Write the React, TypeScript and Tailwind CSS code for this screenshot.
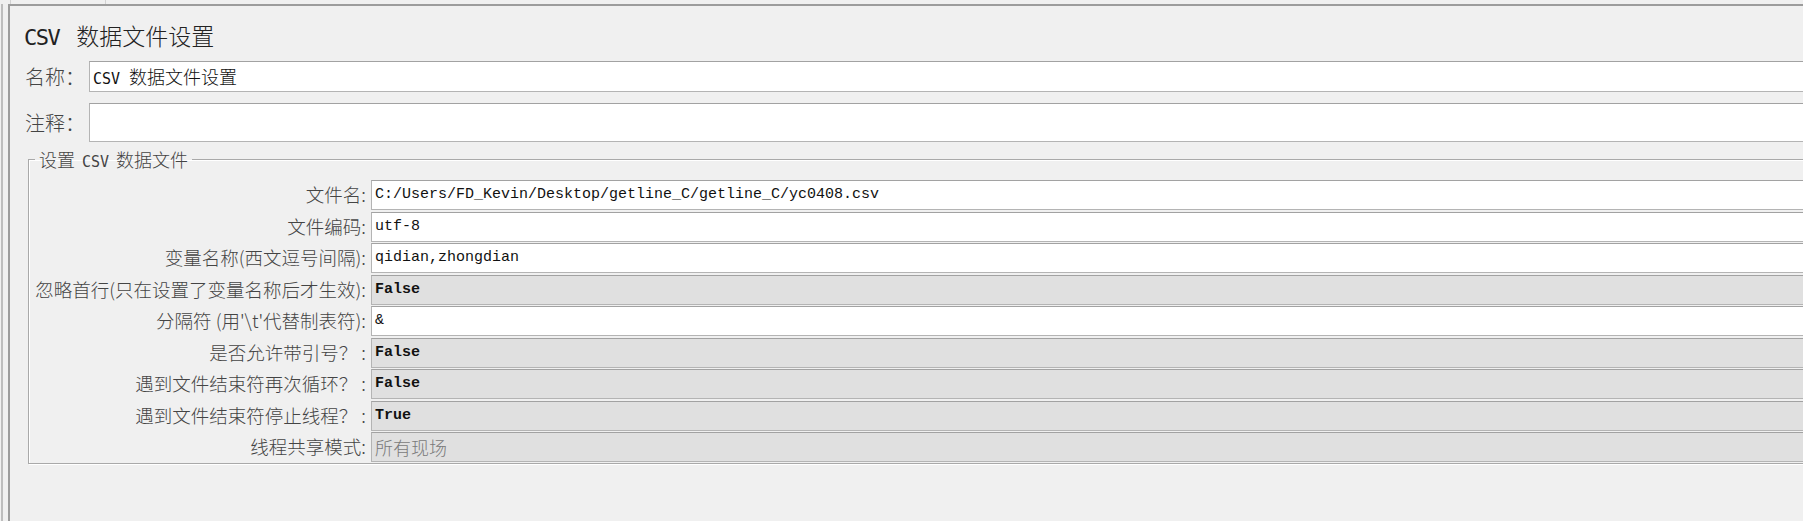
import type { ReactNode } from 'react'

type Row = {
  label: string
  value: string
  kind: 'text' | 'combo' | 'muted'
}

const rows: Row[] = [
  { label: '文件名:', value: 'C:/Users/FD_Kevin/Desktop/getline_C/getline_C/yc0408.csv', kind: 'text' },
  { label: '文件编码:', value: 'utf-8', kind: 'text' },
  { label: '变量名称(西文逗号间隔):', value: 'qidian,zhongdian', kind: 'text' },
  { label: '忽略首行(只在设置了变量名称后才生效):', value: 'False', kind: 'combo' },
  { label: "分隔符 (用'\\t'代替制表符):", value: '&', kind: 'text' },
  { label: '是否允许带引号？ :', value: 'False', kind: 'combo' },
  { label: '遇到文件结束符再次循环？ :', value: 'False', kind: 'combo' },
  { label: '遇到文件结束符停止线程？ :', value: 'True', kind: 'combo' },
  { label: '线程共享模式:', value: '所有现场', kind: 'muted' },
]

const mono = "font-['Liberation_Mono','Noto_Sans_CJK_SC',monospace]"
const caps = "font-['DejaVu_Sans_Mono','Noto_Sans_CJK_SC',monospace]"

function Field({ kind, children, className = '' }: { kind: Row['kind']; children: ReactNode; className?: string }) {
  return (
    <div
      className={[
        'flex items-center pl-[3px] border border-[#b4b4b4] border-t-[#a2a2a2] whitespace-nowrap overflow-hidden',
        kind === 'text' ? 'bg-white' : 'bg-[#e0e0e0]',
        className,
      ].join(' ')}
    >
      {children}
    </div>
  )
}

export default function App() {
  return (
    <div className="w-[1803px] h-[521px] overflow-hidden bg-[#f0f0f0] text-[#444] font-['Noto_Sans_CJK_SC',sans-serif] font-light">
      <div className="h-[4px] flex">
        <div className="ml-[10px] w-[96px] border-x border-[#d2d2d2]" />
      </div>
      <div className="flex h-[517px]">
        <div className="w-[8px] shrink-0 flex">
          <div className="ml-[1px] w-[2px] bg-[#bdbdbd]" />
        </div>
        <div className="w-[1900px] shrink-0 border-l-2 border-t-2 border-[#9c9c9c] pl-[14px]">
          <div className="mt-[14px] h-[30px] leading-[30px] text-[23px] text-[#222] whitespace-nowrap">
            <span className={caps + ' text-[22px] tracking-[-1.5px] mr-[17px]'}>CSV</span>数据文件设置
          </div>

          <div className="mt-[11px] flex items-center h-[31px]">
            <div className="w-[65px] shrink-0 pl-[1px] text-[20px] leading-none">名称：</div>
            <Field kind="text" className="flex-1 h-[31px]">
              <span className="text-[18px] text-[#111] whitespace-nowrap leading-none">
                <span className={caps + ' text-[15px] mr-[9px]'}>CSV</span>数据文件设置
              </span>
            </Field>
          </div>

          <div className="mt-[11px] flex items-center h-[39px]">
            <div className="w-[65px] shrink-0 pl-[1px] text-[20px] leading-none">注释：</div>
            <Field kind="text" className="flex-1 h-[39px]">
              <span />
            </Field>
          </div>

          <fieldset className="mt-[7px] ml-[4px] border border-[#a9a9a9] shadow-[1px_1px_0_#fff,inset_1px_1px_0_#fff] pt-[10px] pb-[1px]">
            <legend className="ml-[6px] px-[4px] text-[18px] leading-[20px] whitespace-nowrap">
              设置<span className={caps + ' text-[15px] mx-[7px] leading-none'}>CSV</span>数据文件
            </legend>
            <div className="grid grid-cols-[340px_1fr] gap-x-[2px] gap-y-[1px]">
              {rows.map((r, i) => (
                <div key={r.label} className="contents">
                  <div
                    className={[
                      'h-[30px] flex items-center justify-end pr-[3px] text-[18.5px] whitespace-nowrap',
                      i % 2 === 1 ? 'mt-[1px]' : '',
                    ].join(' ')}
                  >
                    {r.label}
                  </div>
                  <Field kind={r.kind} className={'h-[30px] ' + (i % 2 === 1 ? 'mt-[1px]' : '')}>
                    {r.kind === 'muted' ? (
                      <span className="text-[18px] text-[#7a7a7a]">{r.value}</span>
                    ) : r.kind === 'combo' ? (
                      <span className={mono + ' text-[15px] font-bold text-[#111]'}>{r.value}</span>
                    ) : (
                      <span className={mono + ' text-[15px] font-normal text-[#111]'}>{r.value}</span>
                    )}
                  </Field>
                </div>
              ))}
            </div>
          </fieldset>
        </div>
      </div>
    </div>
  )
}
